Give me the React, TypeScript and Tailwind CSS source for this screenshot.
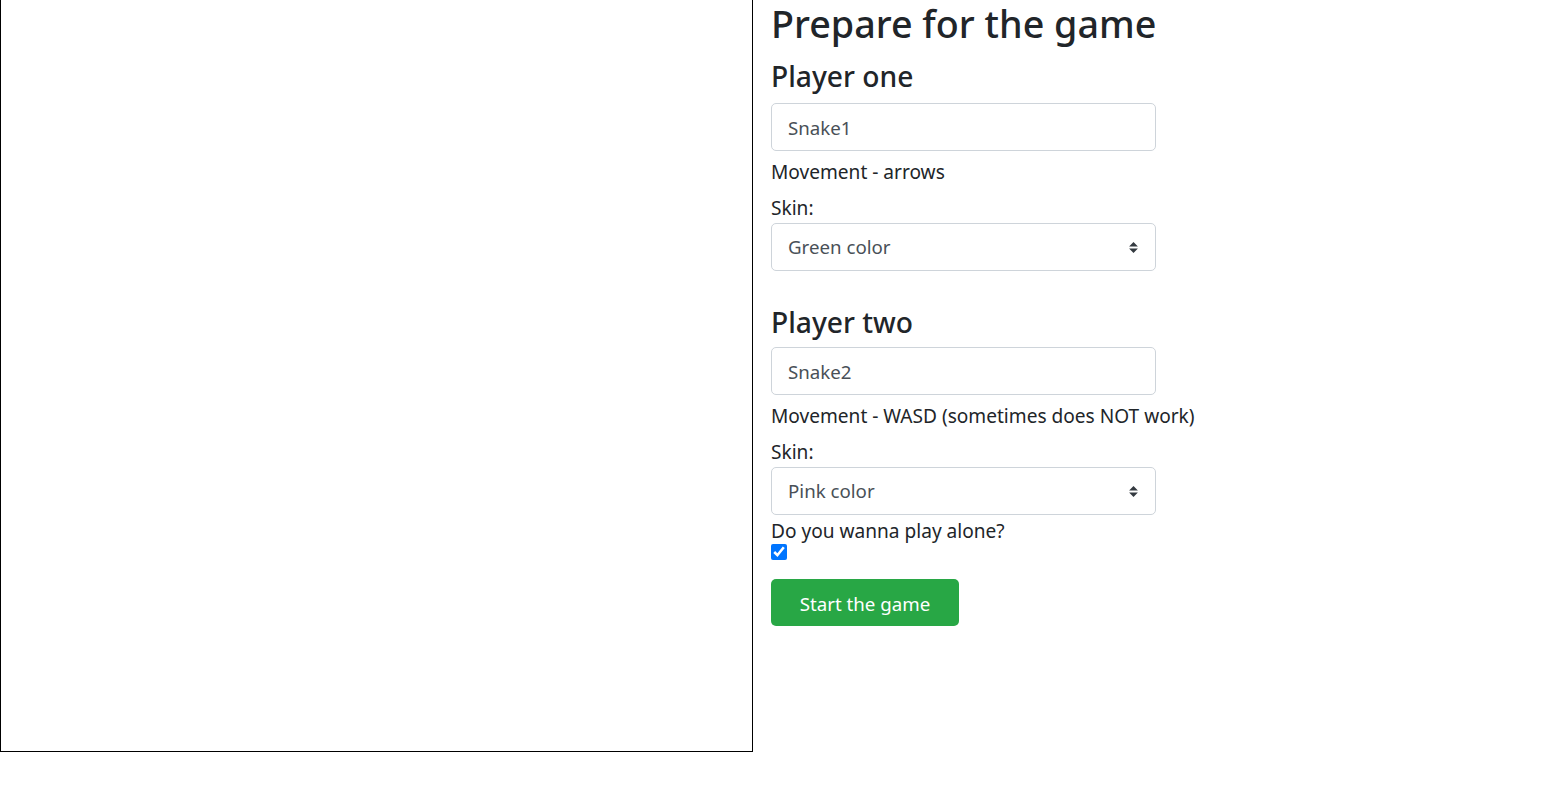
const font = { fontFamily: '"Noto Sans", "Open Sans", sans-serif' };

function SelectBox({ value }: { value: string }) {
  return (
    <div className="flex items-center justify-between w-[385px] h-[48px] pl-4 pr-4 pt-[1px] border border-[#ced4da] rounded-[5px] bg-white text-[18.7px] text-[#495057]">
      <span>{value}</span>
      <svg width="9" height="11" viewBox="0 0 4 5" className="mr-[1px]">
        <path d="M2 0L0 2h4zm0 5L0 3h4z" fill="#343a40" />
      </svg>
    </div>
  );
}

function TextBox({ value }: { value: string }) {
  return (
    <div className="flex items-center w-[385px] h-[48px] px-4 pt-[2px] border border-[#ced4da] rounded-[5px] bg-white text-[18.7px] text-[#495057]">
      {value}
    </div>
  );
}

export default function App() {
  return (
    <div className="flex bg-white text-[#212529]" style={font}>
      {/* game board */}
      <div className="w-[753px] h-[752px] border border-t-0 border-black shrink-0" />

      {/* setup form */}
      <div className="ml-[18px] flex flex-col items-start">
        <h1 className="h-[48px] leading-[48px] text-[37.7px] font-medium whitespace-nowrap">Prepare for the game</h1>

        <h2 className="mt-[8px] h-[40px] leading-[40px] text-[28.2px] font-medium">Player one</h2>
        <div className="mt-[7px]">
          <TextBox value="Snake1" />
        </div>
        <p className="mt-[6px] h-[30px] leading-[30px] text-[19.1px]">Movement - arrows</p>
        <p className="mt-[6px] h-[30px] leading-[30px] text-[19.1px]">Skin:</p>
        <SelectBox value="Green color" />

        <h2 className="mt-[31px] h-[40px] leading-[40px] text-[28.2px] font-medium">Player two</h2>
        <div className="mt-[5px]">
          <TextBox value="Snake2" />
        </div>
        <p className="mt-[6px] h-[30px] leading-[30px] text-[19.1px]">Movement - WASD (sometimes does NOT work)</p>
        <p className="mt-[6px] h-[30px] leading-[30px] text-[19.1px]">Skin:</p>
        <SelectBox value="Pink color" />

        <p className="mt-[1px] h-[28px] leading-[30px] text-[19.1px]">Do you wanna play alone?</p>
        <input type="checkbox" defaultChecked className="w-4 h-4 m-0 accent-[#0075ff]" />

        <button className="mt-[19px] h-[47px] w-[188px] pt-[3px] rounded-[5px] bg-[#28a745] text-white text-[18.7px]">
          Start the game
        </button>
      </div>
    </div>
  );
}
